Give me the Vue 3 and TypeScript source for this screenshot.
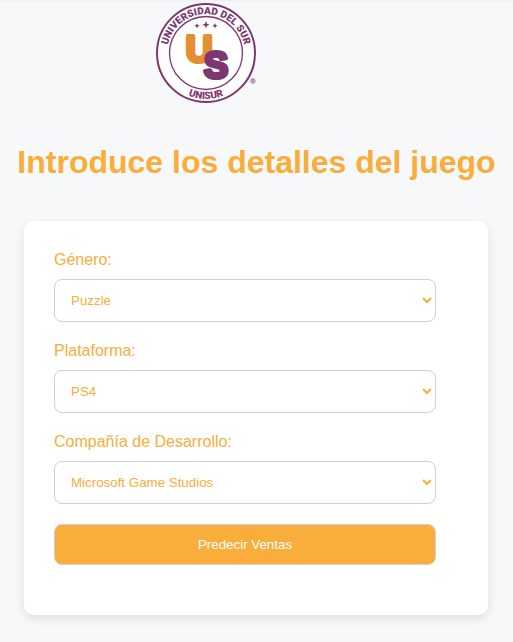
<script setup lang="ts">
import { reactive } from 'vue'

interface Field {
  id: 'genero' | 'plataforma' | 'compania'
  label: string
  options: string[]
}

const fields: Field[] = [
  { id: 'genero', label: 'Género:', options: ['Puzzle'] },
  { id: 'plataforma', label: 'Plataforma:', options: ['PS4'] },
  { id: 'compania', label: 'Compañía de Desarrollo:', options: ['Microsoft Game Studios'] },
]

const form = reactive({
  genero: 'Puzzle',
  plataforma: 'PS4',
  compania: 'Microsoft Game Studios',
})
</script>

<template>
  <main class="page">
    <header class="brand">
      <svg class="logo" viewBox="0 0 104 104" role="img" aria-label="Universidad del Sur">
        <defs>
          <path id="arc-top" d="M 11 51 A 39 39 0 0 1 89 51" />
          <path id="arc-bottom" d="M 4 51 A 46 46 0 0 0 96 51" />
        </defs>
        <circle class="ring-outer" cx="50" cy="51" r="49" />
        <circle class="ring-inner" cx="50" cy="51" r="36.5" />
        <text class="ring-text">
          <textPath href="#arc-top" startOffset="50%">UNIVERSIDAD DEL SUR</textPath>
        </text>
        <text class="ring-text">
          <textPath href="#arc-bottom" startOffset="50%">UNISUR</textPath>
        </text>
        <path
          class="star"
          d="M50 19l1 2.7 2.7 1-2.7 1-1 2.7-1-2.7-2.7-1 2.7-1zM41 21l.8 2 2 .8-2 .8-.8 2-.8-2-2-.8 2-.8zM59 21l.8 2 2 .8-2 .8-.8 2-.8-2-2-.8 2-.8z"
        />
        <text class="letter letter-u" x="43" y="60">U</text>
        <text class="letter letter-s" x="60" y="76">S</text>
        <text class="mark" x="97" y="82">®</text>
      </svg>
    </header>

    <h1 class="title">Introduce los detalles del juego</h1>

    <form class="card" @submit.prevent>
      <div v-for="field in fields" :key="field.id" class="field">
        <label :for="field.id">{{ field.label }}</label>
        <select :id="field.id" v-model="form[field.id]">
          <option v-for="option in field.options" :key="option" :value="option">{{ option }}</option>
        </select>
      </div>
      <button type="submit">Predecir Ventas</button>
    </form>
  </main>
</template>

<style>
body {
  background: #f7f8fa;
}
</style>

<style scoped>
.page {
  font-family: 'Liberation Sans', Arial, sans-serif;
  color: #f9ad3a;
  border-top: 2px solid #f2f3f4;
  padding-bottom: 26px;
}

.brand {
  padding-left: 156px;
}

.logo {
  display: block;
  width: 104px;
  height: 104px;
}

.ring-outer {
  fill: #fff;
  stroke: #7d3670;
  stroke-width: 2;
}

.ring-inner {
  fill: none;
  stroke: #7d3670;
  stroke-width: 1.3;
}

.ring-text {
  font-family: Roboto, sans-serif;
  font-size: 10px;
  font-weight: 900;
  fill: #7d3670;
  text-anchor: middle;
}

.star {
  fill: #7d3670;
}

.letter {
  font-weight: 700;
  text-anchor: middle;
  stroke-linejoin: round;
}

.letter-u {
  font-size: 37px;
  fill: #e68e34;
  stroke: #e68e34;
  stroke-width: 4;
}

.letter-s {
  font-size: 36px;
  fill: #7d3670;
  stroke: #7d3670;
  stroke-width: 4;
}

.mark {
  font-size: 8px;
  font-weight: 700;
  fill: #7d3670;
  text-anchor: middle;
}

.title {
  margin: 36px 0 39px;
  font-size: 32px;
  line-height: 40px;
  font-weight: 700;
  text-align: center;
}

.card {
  display: flex;
  flex-direction: column;
  gap: 20px;
  margin: 0 25px 0 24px;
  padding: 30px 52px 50px 30px;
  background: #fff;
  border-radius: 10px;
  box-shadow: 0 4px 10px rgba(0, 0, 0, 0.1);
}

.field {
  display: flex;
  flex-direction: column;
  gap: 10px;
}

label {
  font-size: 16px;
  line-height: 18px;
}

select,
button {
  box-sizing: border-box;
  width: 100%;
  border: 1px solid #ced0d6;
  border-radius: 8px;
  font-family: inherit;
}

select {
  height: 43px;
  padding: 12px;
  background-color: #fff;
  color: #f9ad3a;
}

button {
  height: 41px;
  background: #f9ad3a;
  color: #fff;
}
</style>
